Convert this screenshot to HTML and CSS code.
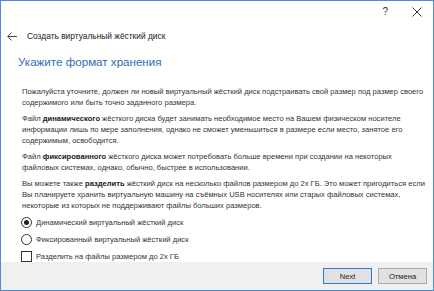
FILE: index.html
```html
<!DOCTYPE html>
<html lang="ru">
<head>
<meta charset="UTF-8" />
<title>Создать виртуальный жёсткий диск</title>
<link rel="stylesheet" href="styles.css">
</head>
<body>
<div class="window">
  <div class="titlebar">
    <span class="tb-btn help">?</span>
    <span class="tb-btn close">
      <svg width="10" height="10" viewBox="0 0 10 10"><path d="M0.5 0.5 L9.5 9.5 M9.5 0.5 L0.5 9.5" stroke="#333" stroke-width="1" fill="none"/></svg>
    </span>
  </div>

  <div class="header">
    <svg class="back" width="10" height="9" viewBox="0 0 10 9"><path d="M4.5 0.5 L0.8 4.5 L4.5 8.5 M0.8 4.5 L10 4.5" stroke="#444" stroke-width="1" fill="none"/></svg>
    <span class="header-title">Создать виртуальный жёсткий диск</span>
  </div>

  <div class="content">
    <h2>Укажите формат хранения</h2>

    <p>Пожалуйста уточните, должен ли новый виртуальный жёсткий диск подстраивать свой размер под размер своего<br>содержимого или быть точно заданного размера.</p>

    <p>Файл <b>динамического</b> жёсткого диска будет занимать необходимое место на Вашем физическом носителе<br>информации лишь по мере заполнения, однако не сможет уменьшиться в размере если место, занятое его<br>содержимым, освободится.</p>

    <p>Файл <b>фиксированного</b> жёсткого диска может потребовать больше времени при создании на некоторых<br>файловых системах, однако, обычно, быстрее в использовании.</p>

    <p>Вы можете также <b>разделить</b> жёсткий диск на несколько файлов размером до 2х ГБ. Это может пригодиться если<br>Вы планируете хранить виртуальную машину на съёмных USB носителях или старых файловых системах,<br>некоторые из которых не поддерживают файлы больших размеров.</p>

    <div class="options">
      <label class="option"><span class="radio checked"></span>Динамический виртуальный жёсткий диск</label>
      <label class="option"><span class="radio"></span>Фиксированный виртуальный жёсткий диск</label>
      <label class="option"><span class="checkbox"></span>Разделить на файлы размером до 2х ГБ</label>
    </div>
  </div>

  <div class="footer">
    <button class="btn default">Next</button>
    <button class="btn">Отмена</button>
  </div>
</div>
</body>
</html>
```

FILE: styles.css
```css
body {
  margin: 0;
  padding: 0;
  background: #fff;
  font-family: 'Liberation Sans', Arial, sans-serif;
  color: #333;
}
.window {
  width: 434px;
  height: 291px;
  box-sizing: border-box;
  border: 1px solid #4a8fd4;
  display: flex;
  flex-direction: column;
  background: #fff;
}
.titlebar {
  height: 21px;
  display: flex;
  justify-content: flex-end;
  align-items: center;
  padding-right: 11px;
  gap: 24px;
}
.tb-btn {
  font-size: 10px;
  color: #333;
  display: flex;
  align-items: center;
}
.header {
  display: flex;
  align-items: center;
  height: 28px;
  padding-left: 6px;
}
.back {
  margin-right: 10px;
}
.header-title {
  font-size: 8.4px;
  color: #1a1a1a;
}
.content {
  flex: 1;
  padding-left: 17px;
}
h2 {
  margin: 5px 0 17px;
  font-size: 11.6px;
  font-weight: normal;
  color: #2f6db5;
  line-height: 14px;
}
p {
  margin: 0 0 5px 4px;
  font-size: 7.58px;
  line-height: 11px;
  white-space: nowrap;
}
b {
  font-weight: bold;
  color: #1a1a1a;
}
.options {
  margin-top: 2px;
  margin-left: 3px;
  display: flex;
  flex-direction: column;
  gap: 5px;
}
.option {
  display: flex;
  align-items: center;
  font-size: 7.58px;
  height: 12px;
}
.radio {
  width: 9px;
  height: 9px;
  border: 1px solid #333;
  border-radius: 50%;
  margin-right: 4px;
  position: relative;
}
.radio.checked::after {
  content: "";
  position: absolute;
  left: 2px;
  top: 2px;
  width: 5px;
  height: 5px;
  border-radius: 50%;
  background: #222;
}
.checkbox {
  width: 9px;
  height: 9px;
  border: 1px solid #333;
  margin-right: 4px;
}
.footer {
  height: 28px;
  background: #f0f0f0;
  display: flex;
  justify-content: flex-end;
  align-items: center;
  gap: 6px;
  padding-right: 6px;
}
.btn {
  width: 49px;
  height: 16px;
  padding: 0;
  font-family: 'Liberation Sans', Arial, sans-serif;
  font-size: 7.6px;
  color: #222;
  background: #e1e1e1;
  border: 1px solid #adadad;
}
.btn.default {
  border-color: #2b79d0;
}
```
